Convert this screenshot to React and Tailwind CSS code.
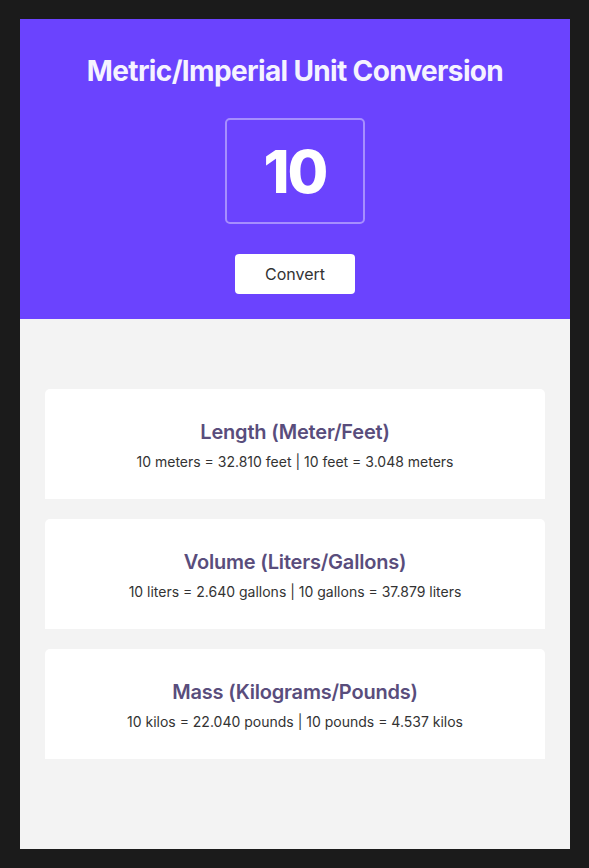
const results = [
  {
    title: "Length (Meter/Feet)",
    left: "10 meters = 32.810 feet",
    right: "10 feet = 3.048 meters",
  },
  {
    title: "Volume (Liters/Gallons)",
    left: "10 liters = 2.640 gallons",
    right: "10 gallons = 37.879 liters",
  },
  {
    title: "Mass (Kilograms/Pounds)",
    left: "10 kilos = 22.040 pounds",
    right: "10 pounds = 4.537 kilos",
  },
];

const App = () => {
  return (
    <div className="min-h-screen bg-[#1b1b1b] px-5 py-[19px] font-['Inter',sans-serif]">
      <div className="w-[550px] h-[830px] bg-[#f3f3f3] flex flex-col">
        {/* Header */}
        <div className="h-[300px] bg-[#6b43fe] flex flex-col items-center pt-[36px]">
          <h1 className="text-[28px] leading-[32px] font-bold text-[#f5f3ff] tracking-[-0.65px]">
            Metric/Imperial Unit Conversion
          </h1>
          <div className="mt-[31px] w-[140px] h-[106px] rounded-[5px] border-2 border-white/40 flex items-center justify-center">
            <span className="text-[59px] leading-none font-extrabold text-white tracking-[-2px]">10</span>
          </div>
          <button className="mt-[30px] w-[120px] h-[40px] rounded-[4px] bg-white text-[16px] text-[#333] font-normal">
            Convert
          </button>
        </div>

        {/* Results */}
        <div className="px-[25px] pt-[70px] flex flex-col gap-[20px]">
          {results.map((r) => (
            <div key={r.title} className="h-[110px] bg-white rounded-t-[5px] flex flex-col items-center pt-[29px]">
              <h2 className="text-[20px] leading-[28px] font-semibold text-[#594d7c] tracking-[-0.2px]">{r.title}</h2>
              <p className="mt-[6px] text-[14px] leading-[20px] text-[#333]">
                {r.left} | {r.right}
              </p>
            </div>
          ))}
        </div>
      </div>
    </div>
  );
};

export default App;
